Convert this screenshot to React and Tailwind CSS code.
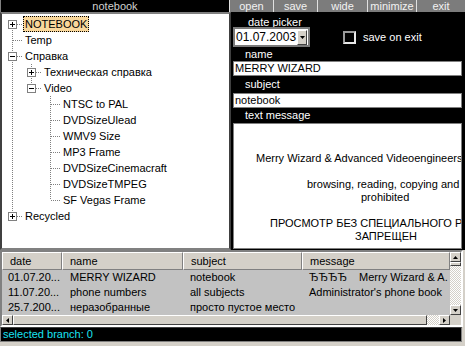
import React from 'react';

const treeRows = [
  { label: 'NOTEBOOK', guides: [], up: false, down: true, box: '+', selected: true },
  { label: 'Temp', guides: [], up: true, down: true },
  { label: 'Справка', guides: [], up: true, down: true, box: '-' },
  { label: 'Техническая справка', guides: [true], up: true, down: true, box: '+' },
  { label: 'Video', guides: [true], up: true, down: false, box: '-' },
  { label: 'NTSC to PAL', guides: [true, false], up: true, down: true },
  { label: 'DVDSizeUlead', guides: [true, false], up: true, down: true },
  { label: 'WMV9 Size', guides: [true, false], up: true, down: true },
  { label: 'MP3 Frame', guides: [true, false], up: true, down: true },
  { label: 'DVDSizeCinemacraft', guides: [true, false], up: true, down: true },
  { label: 'DVDSizeTMPEG', guides: [true, false], up: true, down: true },
  { label: 'SF Vegas Frame', guides: [true, false], up: true, down: false },
  { label: 'Recycled', guides: [], up: true, down: false, box: '+' },
];

const buttons = [
  { label: 'open', w: 'w-[44px]' },
  { label: 'save', w: 'w-[44px]' },
  { label: 'wide', w: 'w-[50px]' },
  { label: 'minimize', w: 'w-[49px]' },
  { label: 'exit', w: 'w-[49px]' },
];

const columns = [
  { label: 'date', w: 'w-[60px]', pl: 'pl-[7px]' },
  { label: 'name', w: 'w-[121px]', pl: 'pl-[7px]' },
  { label: 'subject', w: 'w-[119px]', pl: 'pl-[7px]' },
  { label: 'message', w: 'w-[148px]', pl: 'pl-[7px]' },
];

const records = [
  ['01.07.20...', 'MERRY WIZARD', 'notebook', null],
  ['11.07.20...', 'phone numbers', 'all subjects', "Administrator's phone book"],
  ['25.7.200...', 'неразобранные', 'просто пустое место', ''],
];

const raised = 'bg-[#d4d0c8] border border-t-white border-l-white border-b-[#404040] border-r-[#404040]';
const checker = 'bg-[image:repeating-conic-gradient(#ffffff_0%_25%,#d4d0c8_0%_50%)] bg-[length:2px_2px]';

const Guide = ({ on }) => (
  <svg width="19" height="16" className="shrink-0">
    {on && <line x1="8.5" y1="0" x2="8.5" y2="16" stroke="#808080" strokeDasharray="1 1" />}
  </svg>
);

const Connector = ({ up, down, box }) => (
  <svg width="19" height="16" className="shrink-0">
    <line x1="8.5" y1={up ? 0 : 8} x2="8.5" y2={down ? 16 : 8} stroke="#808080" strokeDasharray="1 1" />
    <line x1="9" y1="8.5" x2="19" y2="8.5" stroke="#808080" strokeDasharray="1 1" />
    {box && (
      <g>
        <rect x="4.5" y="4.5" width="8" height="8" fill="#fff" stroke="#808080" />
        <line x1="6" y1="8.5" x2="11" y2="8.5" stroke="#000" />
        {box === '+' && <line x1="8.5" y1="6" x2="8.5" y2="11" stroke="#000" />}
      </g>
    )}
  </svg>
);

const Arrow = ({ dir }) => {
  const pts = {
    up: '0,3 5,3 2.5,0',
    down: '0,0 5,0 2.5,3',
    left: '3,0 3,5 0,2.5',
    right: '0,0 0,5 3,2.5',
  }[dir];
  const horiz = dir === 'left' || dir === 'right';
  return (
    <svg width={horiz ? 3 : 5} height={horiz ? 5 : 3}>
      <polygon points={pts} fill="#000" />
    </svg>
  );
};

const Label = ({ children, h, pl }) => (
  <div className={`${h} ${pl} flex items-center text-white leading-none`}>{children}</div>
);

export default function App() {
  return (
    <div className="w-[465px] h-[346px] overflow-hidden bg-[#d4d0c8] flex flex-col text-[11px] font-['Liberation_Sans',Arial,sans-serif] text-black">
      {/* title + toolbar */}
      <div className="flex h-[12px] leading-[12px]">
        <div className="w-[229px] shrink-0 bg-black text-[#d0d0d0] text-center border-l border-[#808080]">notebook</div>
        <div className="flex flex-1 bg-[#7c7c7c]">
          {buttons.map((b) => (
            <div key={b.label} className={`${b.w} text-center text-[#f2f2f2] border-l border-[#e0e0e0]`}>
              {b.label}
            </div>
          ))}
        </div>
      </div>

      {/* main row */}
      <div className="flex h-[238px]">
        <div className="w-[231px] shrink-0 bg-white border-2 border-t-[#808080] border-l-[#404040] border-r-[#404040] border-b-[#808080] pt-[2px] pl-[2px] overflow-hidden">
          {treeRows.map((r) => (
            <div key={r.label} className="flex items-center h-[16px]">
              {r.guides.map((g, i) => (
                <Guide key={i} on={g} />
              ))}
              <Connector up={r.up} down={r.down} box={r.box} />
              <span
                className={`whitespace-nowrap leading-[14px] px-[1px] border ${
                  r.selected ? 'border-dotted border-black bg-[#f9d79b]' : 'border-transparent'
                }`}
              >
                {r.label}
              </span>
            </div>
          ))}
        </div>

        <div className="flex-1 min-w-0 bg-black flex flex-col pl-[2px] pr-[3px] pt-[5px] pb-[1px]">
          <Label h="h-[10px]" pl="pl-[15px]">date picker</Label>
          <div className="h-[20px] flex items-center">
            <div className="w-[77px] h-[20px] bg-white border-2 border-[#7a7a7a] flex items-center justify-between pl-[1px] pr-[1px]">
              <span className="text-[12px] leading-none">01.07.2003</span>
              <div className={`w-[10px] h-[15px] ${raised} flex items-center justify-center`}>
                <Arrow dir="down" />
              </div>
            </div>
            <div className="ml-[33px] w-[13px] h-[13px] bg-black border-2 border-t-[#9a9a9a] border-l-[#9a9a9a] border-b-[#e8e8e8] border-r-[#e8e8e8]" />
            <span className="ml-[7px] text-white leading-none">save on exit</span>
          </div>
          <Label h="h-[14px]" pl="pl-[12px]">name</Label>
          <div className="h-[15px] bg-white border border-[#808080] pl-[1px] leading-[13px] whitespace-nowrap">MERRY WIZARD</div>
          <Label h="h-[17px]" pl="pl-[12px]">subject</Label>
          <div className="h-[15px] bg-white border border-[#808080] pl-[1px] leading-[13px] whitespace-nowrap">notebook</div>
          <Label h="h-[15px]" pl="pl-[12px]">text message</Label>
          <div className="flex-1 min-w-0 bg-white border border-[#808080] overflow-hidden pt-[2px] leading-[13px] whitespace-nowrap">
            <div className="h-[26px]" />
            <div className="pl-[22px]">Merry Wizard &amp; Advanced Videoengineers presents</div>
            <div className="h-[13px]" />
            <div className="pl-[73px]">browsing, reading, copying and viewing is</div>
            <div className="pl-[127px]">prohibited</div>
            <div className="h-[13px]" />
            <div className="pl-[36px]">ПРОСМОТР БЕЗ СПЕЦИАЛЬНОГО РАЗРЕШЕНИЯ</div>
            <div className="pl-[121px]">ЗАПРЕЩЕН</div>
          </div>
        </div>
      </div>

      {/* list view */}
      <div className="h-[77px] mr-[2px] flex border-2 border-t-[#808080] border-l-[#808080] border-b-white border-r-white">
        <div className="w-[448px] shrink-0 flex flex-col">
          <div className="h-[18px] flex bg-[#d4d0c8]">
            {columns.map((c) => (
              <div
                key={c.label}
                className={`${c.w} ${c.pl} flex items-center border-l border-l-white border-r border-r-[#808080] border-b border-b-[#808080] border-t border-t-white`}
              >
                {c.label}
              </div>
            ))}
          </div>
          <div className="flex-1 bg-[#c2c2c2] overflow-hidden">
            {records.map((rec, i) => (
              <div key={i} className="h-[15px] flex items-center whitespace-nowrap">
                <div className="w-[60px] pl-[6px] overflow-hidden">{rec[0]}</div>
                <div className="w-[121px] pl-[8px] overflow-hidden">{rec[1]}</div>
                <div className="w-[119px] pl-[7px] overflow-hidden">{rec[2]}</div>
                <div className="w-[148px] pl-[7px] overflow-hidden">
                  {rec[3] === null ? (
                    <>
                      <span>ЂЂЂЂ</span>
                      <span className="ml-[12px]">Merry Wizard &amp; A.</span>
                    </>
                  ) : (
                    rec[3]
                  )}
                </div>
              </div>
            ))}
          </div>
          <div className="h-[10px] flex">
            <div className={`w-[11px] ${raised} flex items-center justify-center`}>
              <Arrow dir="left" />
            </div>
            <div className={`flex-1 ${raised}`} />
            <div className={`w-[12px] ${checker}`} />
            <div className={`w-[11px] ${raised} flex items-center justify-center`}>
              <Arrow dir="right" />
            </div>
          </div>
        </div>
        <div className="flex-1 flex flex-col">
          <div className={`h-[10px] ${raised} flex items-center justify-center`}>
            <Arrow dir="up" />
          </div>
          <div className={`h-[4px] ${raised}`} />
          <div className={`flex-1 ${checker}`} />
          <div className={`h-[10px] ${raised} flex items-center justify-center`}>
            <Arrow dir="down" />
          </div>
          <div className="h-[10px] bg-[#d4d0c8]" />
        </div>
      </div>

      {/* status bar */}
      <div className="h-[15px] mr-[3px] bg-black border border-t-[#404040] border-l-[#808080] border-b-[#808080] border-r-[#808080] pl-[2px] leading-[13px] text-[#19e3f3]">
        selected branch: 0
      </div>
    </div>
  );
}
